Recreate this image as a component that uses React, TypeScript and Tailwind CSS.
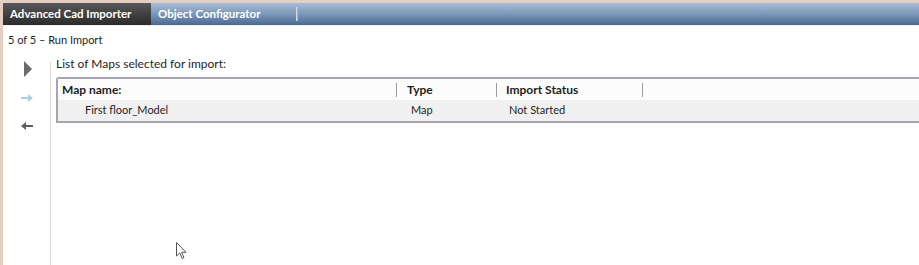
import { ReactNode } from "react";

const FONT = { fontFamily: 'Lato, "Open Sans", "Liberation Sans", sans-serif' };

type Column = { label: string; width: string; pad: string };

const COLUMNS: Column[] = [
  { label: "Map name:", width: "w-[339px]", pad: "pl-[4px]" },
  { label: "Type", width: "w-[100px]", pad: "pl-[10px]" },
  { label: "Import Status", width: "w-[146px]", pad: "pl-[9px]" },
];

const ROWS = [{ name: "First floor_Model", type: "Map", status: "Not Started" }];

function Tab({ active, children }: { active?: boolean; children: ReactNode }) {
  return (
    <div
      className={
        active
          ? "flex h-full w-[148px] items-center whitespace-nowrap bg-gradient-to-b from-[#585858] to-[#2c2c2c] pl-[7px] text-[11.5px] font-bold text-white"
          : "flex h-full w-[145px] items-center whitespace-nowrap pl-[7px] text-[11.5px] font-bold text-white"
      }
    >
      {children}
    </div>
  );
}

function NavIcons() {
  return (
    <div className="flex w-[48px] flex-col items-center border-r border-[#dcdcdc]">
      <svg width="10" height="16" viewBox="0 0 10 16" className="-mt-[1px] ml-[2px]">
        <path d="M1 0 L9 8 L1 16 Z" fill="#6b6b6b" />
      </svg>
      <svg width="12" height="8" viewBox="0 0 12 8" className="mt-[17px]">
        <path d="M0 3 H7 V0 L12 4 L7 8 V5 H0 Z" fill="#a9d3e2" />
      </svg>
      <svg width="12" height="8" viewBox="0 0 12 8" className="mt-[20px]">
        <path d="M12 3 H5 V0 L0 4 L5 8 V5 H12 Z" fill="#5e5e5e" />
      </svg>
    </div>
  );
}

export default function App() {
  return (
    <div
      className="relative h-[265px] w-[919px] overflow-hidden border-l-[3px] border-t-[3px] border-[#e6cfc0] bg-white text-[#1e1e1e]"
      style={FONT}
    >
      <div className="flex h-[22px] bg-gradient-to-b from-[#a9bdd6] via-[#7c97b8] to-[#4a6a90]">
        <Tab active>Advanced Cad Importer</Tab>
        <Tab>Object Configurator</Tab>
        <div className="mt-[4px] h-[14px] w-[2px] bg-gradient-to-r from-[#e8eef6] to-[#8aa0bb]" />
      </div>
      <div className="h-[1px] bg-[#eef0f3]" />

      <div className="whitespace-nowrap pl-[5px] pt-[6px] text-[11px] leading-[16px]">5 of 5 – Run Import</div>

      <div className="mt-[14px] flex h-[250px]">
        <NavIcons />
        <div className="flex-1 pl-[5px]">
          <div className="-mt-[5px] whitespace-nowrap text-[12px] leading-[14px]">List of Maps selected for import:</div>
          <div className="mt-[6px] rounded-tl-[3px] border-y-2 border-l-2 border-[#a4a8ae]">
            <div className="flex h-[21px] items-center bg-[#fcfcfd] text-[12px] font-bold">
              {COLUMNS.map((c) => (
                <div key={c.label} className={`${c.width} ${c.pad} flex h-[14px] items-center border-r border-[#9a9a9a]`}>
                  {c.label}
                </div>
              ))}
            </div>
            {ROWS.map((r) => (
              <div key={r.name} className="flex h-[21px] items-center bg-[#f0f0f0] text-[11px]">
                <div className="w-[339px] pl-[27px]">{r.name}</div>
                <div className="w-[100px] pl-[14px]">{r.type}</div>
                <div className="w-[146px] pl-[12px]">{r.status}</div>
              </div>
            ))}
          </div>
        </div>
      </div>

      <svg
        width="12"
        height="18"
        viewBox="0 0 12 18"
        className="absolute left-[173px] top-[239px]"
      >
        <path d="M0.5 0.5 V14 L3.8 11 L6.2 16.5 L8 15.7 L5.6 10.3 H10 Z" fill="white" stroke="#555" strokeWidth="1" />
      </svg>
    </div>
  );
}
